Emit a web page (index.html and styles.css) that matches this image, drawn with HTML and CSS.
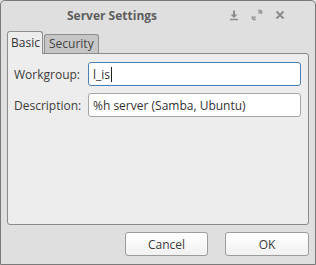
FILE: index.html
```html
<!DOCTYPE html>
<html>
<head>
<meta charset="utf-8">
<link rel="stylesheet" href="styles.css">
</head>
<body>
<div class="window">
  <div class="titlebar">
    <div class="title">Server Settings</div>
    <div class="controls">
      <svg class="ctl" width="12" height="12" viewBox="0 0 12 12">
        <path d="M6 1.5V6" stroke="#8c8c8c" stroke-width="2" fill="none"/>
        <path d="M2.5 5.5H9.5L6 9Z" fill="#8c8c8c"/>
        <path d="M2 10.5H10" stroke="#8c8c8c" stroke-width="1.5"/>
      </svg>
      <svg class="ctl" width="12" height="12" viewBox="0 0 12 12">
        <path d="M1.5 10.5L4.5 7.5M1.5 10.5V7M1.5 10.5H5" stroke="#9a9a9a" stroke-width="1.6" fill="none"/>
        <path d="M10.5 1.5L7.5 4.5M10.5 1.5V5M10.5 1.5H7" stroke="#9a9a9a" stroke-width="1.6" fill="none"/>
      </svg>
      <svg class="ctl" width="12" height="12" viewBox="0 0 12 12">
        <path d="M2.5 2.5L9.5 9.5M9.5 2.5L2.5 9.5" stroke="#8c8c8c" stroke-width="2" fill="none"/>
      </svg>
    </div>
  </div>
  <div class="tabs">
    <div class="tab active">Basic</div>
    <div class="tab">Security</div>
  </div>
  <div class="frame">
    <div class="form">
      <label class="label">Workgroup:</label>
      <div class="input focus"><span>l_is</span><span class="caret"></span></div>
      <label class="label">Description:</label>
      <div class="input"><span>%h server (Samba, Ubuntu)</span></div>
    </div>
  </div>
  <div class="footer">
    <div class="btn">Cancel</div>
    <div class="btn">OK</div>
  </div>
</div>
</body>
</html>
```

FILE: styles.css
```css
html, body {
  margin: 0;
  padding: 0;
  background: #dfdfdf;
}
body {
  font-family: "Open Sans", "Noto Sans", sans-serif;
  font-size: 12px;
  color: #3a3a3a;
}
.window {
  width: 316px;
  height: 265px;
  box-sizing: border-box;
  border: 1px solid #7a7a7a;
  border-radius: 5px 5px 0 0;
  background: #dfdfdf;
  display: flex;
  flex-direction: column;
}
.titlebar {
  height: 30px;
  display: flex;
  align-items: center;
}
.title {
  width: 222px;
  text-align: center;
  font-weight: bold;
  font-size: 12px;
  color: #5e5e5e;
  padding-bottom: 1px;
}
.controls {
  display: flex;
  gap: 11px;
  padding-left: 5px;
  padding-bottom: 2px;
}
.ctl {
  display: block;
}
.tabs {
  display: flex;
  align-items: flex-end;
  padding-left: 6px;
  height: 23px;
  margin-bottom: -1px;
}
.tab {
  box-sizing: border-box;
  height: 20px;
  padding: 0 4px;
  line-height: 18px;
  border: 1px solid #8e8e8e;
  border-bottom: none;
  border-radius: 3px 3px 0 0;
  background: #c6c6c6;
  color: #444;
  font-size: 12px;
  margin-right: 1px;
}
.tab.active {
  height: 23px;
  line-height: 22px;
  background: #ededed;
  color: #333;
  position: relative;
  z-index: 1;
  padding: 0 3px;
  width: 36px;
}
.frame {
  margin-left: 6px;
  width: 302px;
  height: 172px;
  box-sizing: border-box;
  border: 1px solid #8a8a8a;
  border-radius: 0 3px 3px 3px;
  background: #ededed;
  padding: 8px 7px 0 6px;
}
.form {
  display: grid;
  grid-template-columns: 74px 1fr;
  row-gap: 7px;
  align-items: center;
}
.label {
  color: #3c3c3c;
  font-size: 12px;
}
.input {
  box-sizing: border-box;
  height: 24px;
  border: 1px solid #a6a6a6;
  border-radius: 3px;
  background: #ffffff;
  padding: 0 4px;
  display: flex;
  align-items: center;
  color: #333;
  font-size: 12px;
}
.input.focus {
  border-color: #4c7fb4;
}
.caret {
  display: inline-block;
  width: 1px;
  height: 15px;
  background: #222;
  margin-left: 1px;
}
.footer {
  display: flex;
  justify-content: flex-end;
  gap: 17px;
  padding: 7px 6px 0 0;
}
.btn {
  box-sizing: border-box;
  height: 24px;
  border: 1px solid #9c9c9c;
  border-radius: 3px;
  background: linear-gradient(#ffffff, #f1f1f1);
  display: flex;
  align-items: center;
  justify-content: center;
  color: #3a3a3a;
  font-size: 12px;
}
.btn:first-child {
  width: 83px;
}
.btn:last-child {
  width: 84px;
}
```
